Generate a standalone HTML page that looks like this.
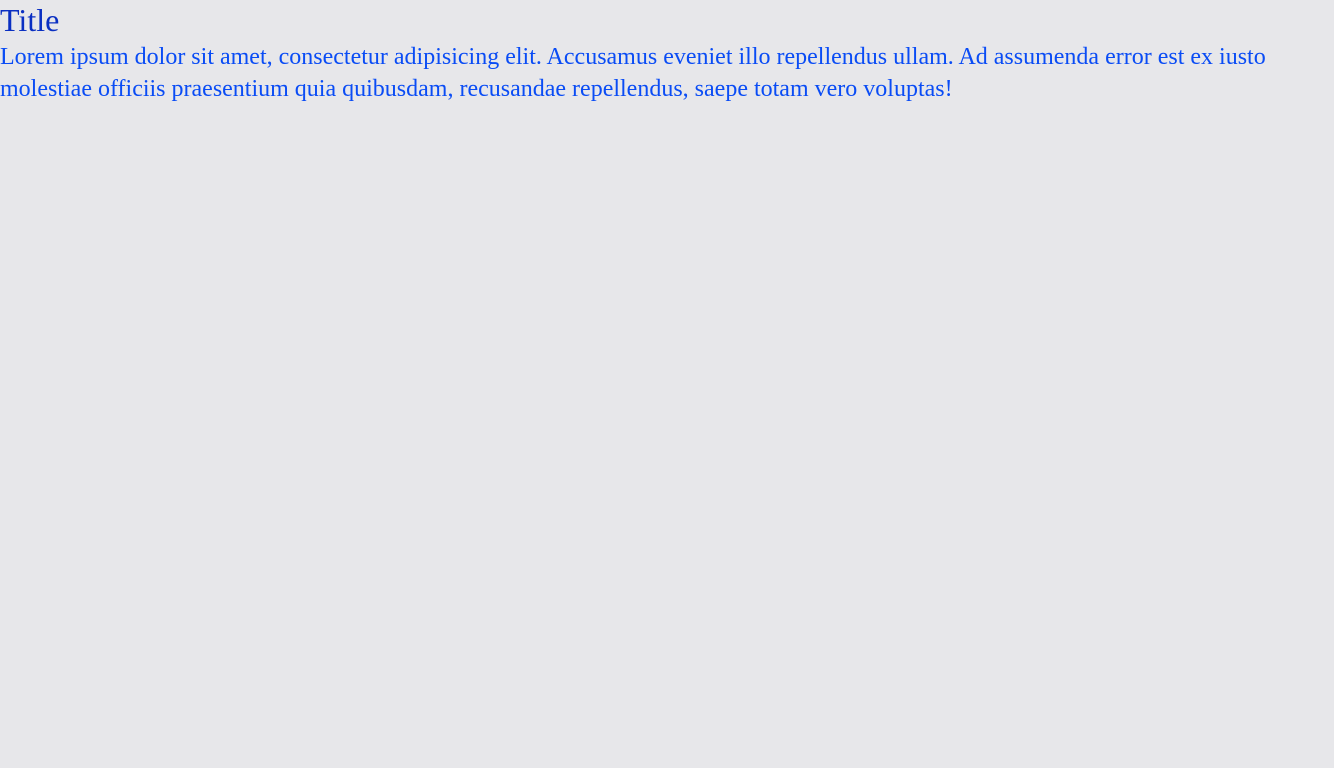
<!DOCTYPE html>
<html><head><style>
html,body{margin:0;padding:0;background:#e7e7ea;width:1334px;height:768px;overflow:hidden}
h1{margin:0;font:normal 32px/40px "Liberation Serif",serif;color:#0a2fc2;height:41px}
p{margin:0;font:24px/32px "Liberation Serif",serif;color:#0a4cf5;width:1334px}
</style></head><body>
<h1>Title</h1>
<p>Lorem ipsum dolor sit amet, consectetur adipisicing elit. Accusamus eveniet illo repellendus ullam. Ad assumenda error est ex iusto molestiae officiis praesentium quia quibusdam, recusandae repellendus, saepe totam vero voluptas!</p>
</body></html>
